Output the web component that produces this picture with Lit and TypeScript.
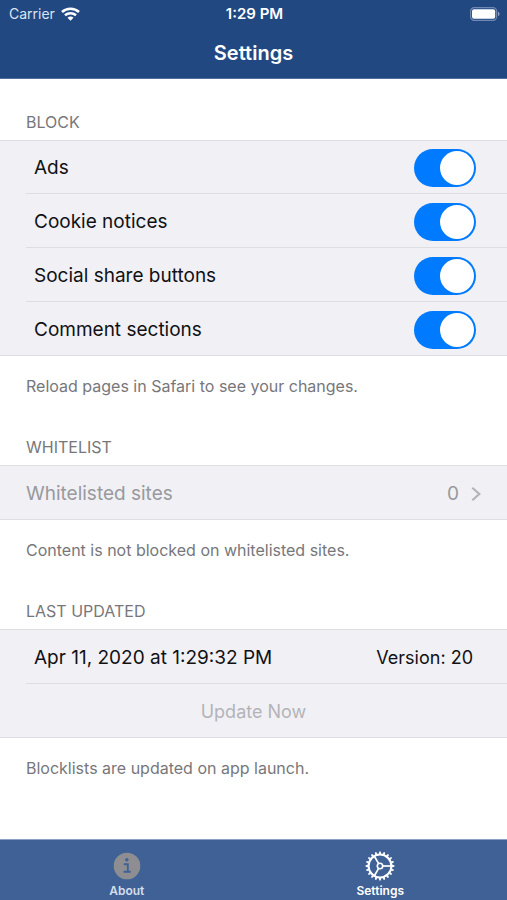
import { LitElement, html, svg, css } from "lit";
import { customElement, state } from "lit/decorators.js";

interface BlockOption {
  id: string;
  label: string;
  on: boolean;
}

const spokes = [0, 120, 240];
const teeth = Array.from({ length: 20 }, (_, i) => i * 18);

@customElement("app-root")
export class AppRoot extends LitElement {
  @state() private options: BlockOption[] = [
    { id: "ads", label: "Ads", on: true },
    { id: "cookies", label: "Cookie notices", on: true },
    { id: "social", label: "Social share buttons", on: true },
    { id: "comments", label: "Comment sections", on: true },
  ];

  static styles = css`
    :host {
      display: flex;
      flex-direction: column;
      min-height: 100vh;
      background: #fff;
      color: #111114;
      font-family: Inter, "Liberation Sans", sans-serif;
      font-size: 19px;
      line-height: 24px;
    }
    * {
      box-sizing: border-box;
    }
    h1,
    h2,
    p {
      margin: 0;
    }
    svg {
      display: block;
    }
    .top {
      height: 79px;
      background: #224882;
      border-bottom: 1px solid #52709f;
      color: #fff;
    }
    .status {
      display: grid;
      grid-template-columns: 1fr auto 1fr;
      align-items: center;
      height: 27px;
      padding: 0 7px 0 9px;
      font-size: 15px;
      line-height: 20px;
    }
    .carrier {
      display: flex;
      align-items: center;
      gap: 6px;
      color: #dbe4f2;
      font-size: 14px;
    }
    .clock {
      font-weight: 600;
    }
    .battery {
      justify-self: end;
    }
    .title {
      font-size: 20px;
      font-weight: 600;
      line-height: 52px;
      text-align: center;
    }
    .content {
      flex: 1;
      padding: 33px 0 40px;
    }
    .section + .section {
      margin-top: 41px;
    }
    .caption,
    .note {
      padding: 0 26px;
      color: #77777b;
      font-size: 16px;
      font-weight: 400;
      line-height: 20px;
    }
    .caption {
      padding-bottom: 8px;
    }
    .note {
      padding-top: 20px;
    }
    .group {
      background: #f0f0f5;
      border-top: 1px solid #dedee2;
      border-bottom: 1px solid #dedee2;
      padding-left: 26px;
    }
    .row {
      display: flex;
      align-items: center;
      justify-content: space-between;
      width: 100%;
      height: 53px;
      padding: 2px 34px 0 8px;
    }
    .row.option {
      height: 52px;
      padding-right: 31px;
    }
    .row + .row {
      height: 54px;
      border-top: 1px solid #dedee2;
    }
    .row.link {
      padding: 2px 26px 0 0;
      color: #99999d;
      text-decoration: none;
    }
    .row.action {
      justify-content: center;
      padding: 2px 26px 0 0;
    }
    .count {
      display: flex;
      align-items: center;
      gap: 12px;
    }
    .version,
    .update {
      font-size: 18px;
    }
    .update {
      border: 0;
      padding: 0;
      background: none;
      color: #b4b4b8;
      font-family: inherit;
      line-height: 24px;
    }
    .switch {
      appearance: none;
      display: flex;
      flex: none;
      width: 62px;
      height: 38px;
      margin: 0;
      padding: 2px;
      border-radius: 19px;
      background: #d5d5da;
      cursor: pointer;
    }
    .switch::before {
      content: "";
      width: 34px;
      height: 34px;
      border-radius: 50%;
      background: #fff;
    }
    .switch:checked {
      justify-content: flex-end;
      background: #007aff;
    }
    .tabs {
      display: grid;
      grid-template-columns: 1fr 1fr;
      height: 61px;
      background: #406196;
      border-top: 1px solid #8b9fc0;
    }
    .tab {
      display: flex;
      flex-direction: column;
      align-items: center;
      justify-content: flex-end;
      gap: 2px;
      padding-bottom: 1px;
      color: #d5deec;
      font-size: 12px;
      font-weight: 600;
      line-height: 16px;
      text-decoration: none;
    }
    .tab svg {
      width: 30px;
      height: 30px;
    }
    .tab.current {
      color: #fff;
    }
  `;

  private toggle(id: string) {
    this.options = this.options.map((o) => (o.id === id ? { ...o, on: !o.on } : o));
  }

  private wifiIcon() {
    return html`<svg width="19" height="14" viewBox="0 0 19 14" fill="none" stroke="#fff" stroke-width="2.6" aria-hidden="true">
      <path d="M1 5C5.700.7 13.300.7 18 5" />
      <path d="M4 8.300c3.200-2.800 7.800-2.800 11 0" />
      <path d="M9.500 13.700 6.500 10.800c1.600-1.600 4.400-1.600 6 0z" fill="#fff" stroke="none" />
    </svg>`;
  }

  private batteryIcon() {
    return html`<svg class="battery" width="31" height="14" viewBox="0 0 31 14" role="img" aria-label="Battery full">
      <rect x="1.600" y=".7" width="26" height="12.600" rx="3.600" fill="none" stroke="#7089b3" stroke-width="1.200" />
      <rect x="3" y="2.200" width="23.200" height="9.600" rx="2" fill="#fff" />
      <path d="M29 4.800c2 .7 2 3.700 0 4.400z" fill="#8ea3c4" />
    </svg>`;
  }

  private infoIcon() {
    return html`<svg viewBox="-1 -1 30 30" aria-hidden="true">
      <circle cx="14" cy="14" r="13.300" fill="#8e8e92" />
      <circle cx="13.800" cy="7.800" r="1.800" fill="#406196" />
      <path d="M10.800 12.200h4v7.300M10.500 19.700h7.200" fill="none" stroke="#406196" stroke-width="1.900" />
    </svg>`;
  }

  private gearIcon() {
    return html`<svg viewBox="-15 -15 30 30" fill="none" stroke="#fff" aria-hidden="true">
      <circle r="11.400" stroke-width="2" />
      ${teeth.map((a) => svg`<path d="M-1.200-12-.7-14.400H.7L1.200-12z" fill="#fff" stroke="none" transform="rotate(${a})" />`)}
      <circle r="2.700" stroke-width="1.600" />
      ${spokes.map((a) => svg`<path d="M3 0H11" stroke-width="1.700" transform="rotate(${a})" />`)}
    </svg>`;
  }

  render() {
    return html`
      <header class="top">
        <div class="status">
          <span class="carrier">Carrier ${this.wifiIcon()}</span>
          <span class="clock">1:29 PM</span>
          ${this.batteryIcon()}
        </div>
        <h1 class="title">Settings</h1>
      </header>
      <main class="content">
        <section class="section">
          <h2 class="caption">BLOCK</h2>
          <div class="group">
            ${this.options.map(
              (o) => html`<div class="row option">
                <label for=${o.id}>${o.label}</label>
                <input class="switch" type="checkbox" role="switch" id=${o.id} .checked=${o.on} @change=${() => this.toggle(o.id)} />
              </div>`
            )}
          </div>
          <p class="note">Reload pages in Safari to see your changes.</p>
        </section>
        <section class="section">
          <h2 class="caption">WHITELIST</h2>
          <div class="group">
            <a class="row link" href="#whitelist">
              <span>Whitelisted sites</span>
              <span class="count">0
                <svg width="10" height="16" viewBox="0 0 10 16" fill="none" stroke="#b4b4b8" stroke-width="2.200" aria-hidden="true">
                  <path d="M1.300 1.800 8.300 8l-7 6.200" />
                </svg>
              </span>
            </a>
          </div>
          <p class="note">Content is not blocked on whitelisted sites.</p>
        </section>
        <section class="section">
          <h2 class="caption">LAST UPDATED</h2>
          <div class="group">
            <div class="row">
              <span>Apr 11, 2020 at 1:29:32 PM</span>
              <span class="version">Version: 20</span>
            </div>
            <div class="row action">
              <button class="update" type="button" disabled>Update Now</button>
            </div>
          </div>
          <p class="note">Blocklists are updated on app launch.</p>
        </section>
      </main>
      <nav class="tabs">
        <a class="tab" href="#about">${this.infoIcon()}<span>About</span></a>
        <a class="tab current" href="#settings" aria-current="page">${this.gearIcon()}<span>Settings</span></a>
      </nav>
    `;
  }
}
